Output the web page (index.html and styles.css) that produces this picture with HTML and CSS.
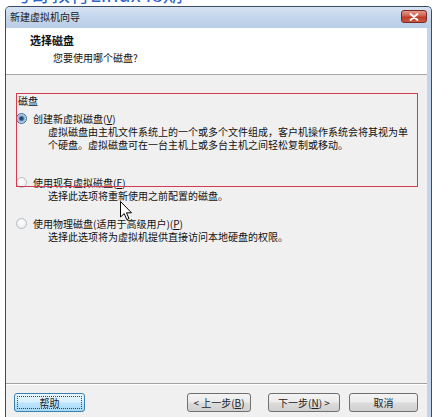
FILE: index.html
```html
<!DOCTYPE html>
<html>
<head>
<meta charset="utf-8">
<link rel="stylesheet" href="styles.css">
</head>
<body>
<div class="page">
  <div class="bgstrip"><span class="bgtext">马哥教育Linux48期</span></div>
  <div class="window">
    <div class="titlebar">
      <span class="title">新建虚拟机向导</span>
      <span class="close"><svg width="10" height="8" viewBox="0 0 10 8"><path d="M1.5 1 L8.5 7 M8.5 1 L1.5 7" stroke="#fff" stroke-width="1.8" stroke-linecap="round"/></svg></span>
    </div>
    <div class="frame">
      <div class="client">
        <div class="header">
          <div class="h-title">选择磁盘</div>
          <div class="h-sub">您要使用哪个磁盘?</div>
        </div>
        <div class="content">
          <div class="group-label">磁盘</div>
          <div class="opt">
            <span class="radio checked"></span>
            <span>创建新虚拟磁盘(<u>V</u>)</span>
          </div>
          <div class="desc">虚拟磁盘由主机文件系统上的一个或多个文件组成，客户机操作系统会将其视为单<br>个硬盘。虚拟磁盘可在一台主机上或多台主机之间轻松复制或移动。</div>
          <div class="opt opt2">
            <span class="radio"></span>
            <span>使用现有虚拟磁盘(<u>E</u>)</span>
          </div>
          <div class="desc">选择此选项将重新使用之前配置的磁盘。</div>
          <div class="opt opt3">
            <span class="radio"></span>
            <span>使用物理磁盘(适用于高级用户)(<u>P</u>)</span>
          </div>
          <div class="desc">选择此选项将为虚拟机提供直接访问本地硬盘的权限。</div>
          <div class="annot"></div>
          <svg class="cursor" width="13" height="20" viewBox="0 0 13 20"><path d="M0.5 0.5 L0.5 16 L4.2 12.6 L6.8 18.6 L9 17.6 L6.5 11.8 L11.5 11.8 Z" fill="#fff" stroke="#000" stroke-width="1" stroke-linejoin="miter"/></svg>
        </div>
        <div class="footer">
          <button class="btn btn-help"><span class="focus">帮助</span></button>
          <span class="spacer"></span>
          <button class="btn btn-back">&lt; 上一步(<u>B</u>)</button>
          <button class="btn btn-next">下一步(<u>N</u>) &gt;</button>
          <button class="btn btn-cancel">取消</button>
        </div>
      </div>
    </div>
  </div>
</div>
</body>
</html>
```

FILE: styles.css
```css
html, body {
  margin: 0;
  padding: 0;
}
body {
  width: 435px;
  height: 417px;
  overflow: hidden;
  background: #ffffff;
  font-family: "Noto Sans CJK SC", "Noto Sans", sans-serif;
  font-size: 10px;
  color: #111;
}
.page {
  width: 435px;
  height: 417px;
  display: flex;
  flex-direction: column;
}
.bgstrip {
  height: 6px;
  overflow: hidden;
  padding-left: 10px;
  flex: none;
}
.bgtext {
  display: block;
  font-size: 20px;
  line-height: 24px;
  margin-top: -18px;
  color: #2d63c8;
  font-family: "Noto Sans CJK SC", "Liberation Sans", sans-serif;
}
.window {
  margin-left: 5px;
  width: 425px;
  flex: 1;
  border: 1px solid #3b4d62;
  border-bottom: none;
  border-radius: 5px 5px 0 0;
  background: #c3d5eb;
  display: flex;
  flex-direction: column;
  overflow: hidden;
}
.titlebar {
  height: 21px;
  flex: none;
  display: flex;
  align-items: center;
  justify-content: space-between;
  padding: 0 4px 0 4px;
  background: linear-gradient(to bottom, #d6e3f3 0%, #c4d6ec 50%, #b9cde6 100%);
}
.title {
  font-size: 10px;
  color: #1a1a1a;
  line-height: 12px;
  margin-top: -1px;
}
.close {
  width: 26px;
  height: 13px;
  margin-top: -2px;
  border: 1px solid #7a2a24;
  border-radius: 3px;
  background: linear-gradient(to bottom, #e49a8c 0%, #d0604c 45%, #bf3a28 55%, #c95a40 100%);
  display: flex;
  align-items: center;
  justify-content: center;
  box-sizing: border-box;
}
.frame {
  flex: 1;
  display: flex;
  padding: 0 4px 0 0;
  min-height: 0;
}
.client {
  flex: 1;
  display: flex;
  flex-direction: column;
  background: #f0f0f0;
  min-height: 0;
}
.header {
  height: 45px;
  flex: none;
  background: #ffffff;
  border-bottom: 1px solid #a8a8a8;
  box-sizing: border-box;
  padding: 6px 0 0 24px;
  height: 47px;
}
.h-title {
  font-weight: bold;
  font-size: 11px;
  line-height: 13px;
}
.h-sub {
  line-height: 13px;
  margin-top: 4px;
  padding-left: 23px;
}
.content {
  position: relative;
  height: 309px;
  flex: none;
  box-sizing: border-box;
  padding-top: 19px;
  border-bottom: 1px solid #a0a0a0;
  line-height: 13px;
}
.group-label {
  padding-left: 12px;
}
.opt {
  display: flex;
  align-items: center;
  gap: 6px;
  padding-left: 10px;
  margin-top: 5px;
}
.opt2 {
  margin-top: 25px;
}
.opt3 {
  margin-top: 15px;
}
.desc {
  padding-left: 42px;
  line-height: 13px;
}
.radio {
  width: 11px;
  height: 11px;
  box-sizing: border-box;
  border-radius: 50%;
  border: 1px solid #b8bcc2;
  background: radial-gradient(circle at 50% 40%, #ffffff 0%, #e6e8ea 100%);
  flex: none;
}
.radio.checked {
  border: 1px solid #3d6d95;
  background: radial-gradient(circle, #1e3e5e 0%, #2f5d86 28%, #8fb6d6 45%, #d7e7f3 80%);
}
.annot {
  position: absolute;
  left: 10px;
  top: 18px;
  width: 402px;
  height: 94px;
  border: 1px solid #d43b50;
  box-sizing: border-box;
}
.cursor {
  position: absolute;
  left: 114px;
  top: 126px;
}
.footer {
  flex: 1;
  border-top: 1px solid #ffffff;
  display: flex;
  align-items: flex-start;
  padding: 8px 9px 0 8px;
}
.spacer {
  flex: 1;
}
.btn {
  height: 19px;
  box-sizing: border-box;
  border: 1px solid #707070;
  border-radius: 3px;
  background: linear-gradient(to bottom, #f4f4f4 0%, #ebebeb 48%, #dcdcdc 52%, #d0d0d0 100%);
  font-family: "Noto Sans CJK SC", "Noto Sans", sans-serif;
  font-size: 10px;
  line-height: 13px;
  color: #222;
  padding: 0;
  margin: 0;
  display: flex;
  align-items: center;
  justify-content: center;
}
.btn-help {
  width: 71px;
  border-color: #3c7fb1;
  background: linear-gradient(to bottom, #eaf6fd 0%, #d9f0fc 48%, #bee6fd 52%, #a7d9f5 100%);
  padding: 2px;
}
.focus {
  flex: 1;
  align-self: stretch;
  border: 1px dotted #444;
  display: flex;
  align-items: center;
  justify-content: center;
}
.btn-back {
  width: 64px;
  margin-right: 17px;
}
.btn-next {
  width: 72px;
  margin-right: 9px;
}
.btn-cancel {
  width: 69px;
}
```
